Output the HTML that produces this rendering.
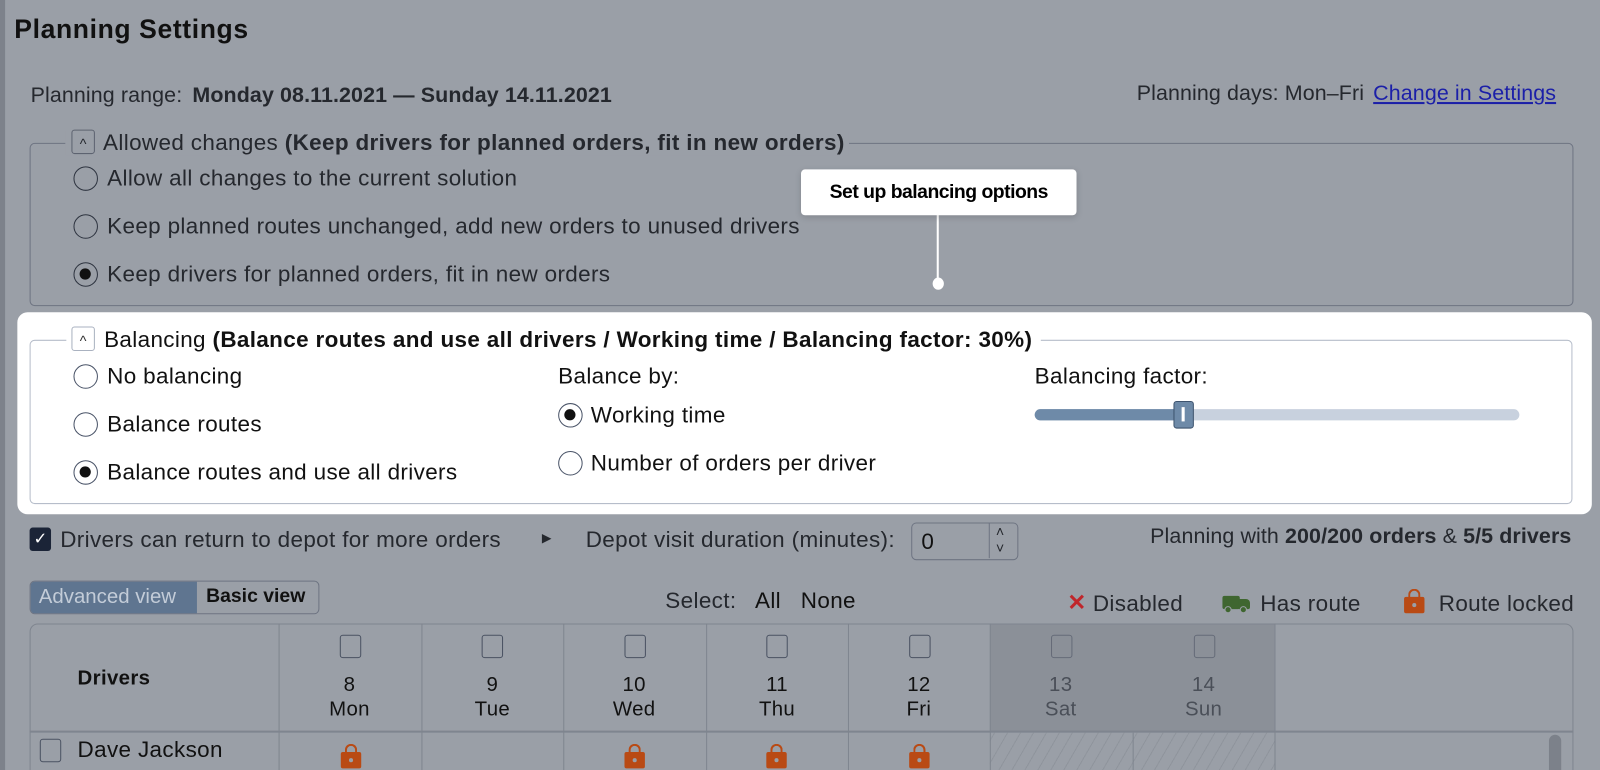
<!DOCTYPE html>
<html style="width:1600px;height:770px;overflow:hidden"><head><meta charset="utf-8"><style>
*{box-sizing:border-box;margin:0;padding:0}
body{width:1600px;height:770px;overflow:hidden;background:#9a9fa7;font-family:"Liberation Sans",Arial,sans-serif;color:#25282e;position:relative;font-size:22px;letter-spacing:0.35px}
#w{position:absolute;left:0;top:0;width:1568px;height:755px;transform:scale(1.0204);transform-origin:0 0;overflow:hidden}
.a{position:absolute;white-space:nowrap}
.l{line-height:24px}
.r{position:absolute;width:24px;height:24px;border-radius:50%;border:1.5px solid #2e3440}
.r.on::after{content:"";position:absolute;left:5px;top:5px;width:11px;height:11px;border-radius:50%;background:#111}
.wb .r{border-color:#4a5468}
.chev{position:absolute;width:23px;height:24px;border:1px solid #5d6370;border-radius:3px;font-size:14px;text-align:center;line-height:26px;letter-spacing:0}
.cb{position:absolute;width:21px;height:23px;border:1.5px solid #4a5262;border-radius:3px}
.col{position:absolute;top:611px;height:159px;border-left:1px solid #7f858f}
.hd{position:absolute;text-align:center;width:139px;line-height:24px;font-size:20px;letter-spacing:0.3px}
.lock{position:absolute;width:20px;height:16px;background:#b94a14;border-radius:2px}
.lock::before{content:"";position:absolute;left:4px;top:-8px;width:8px;height:9px;border:2px solid #b94a14;border-bottom:none;border-radius:6px 6px 0 0}
.lock::after{content:"";position:absolute;left:8px;top:6px;width:4px;height:4px;border-radius:50%;background:#9a9fa7}
</style></head><body><div id="w">
<div class="a" style="left:0;top:0;width:5px;height:770px;background:#7d828b"></div>
<div class="a" style="left:14px;top:13px;font-size:26px;font-weight:bold;color:#111;letter-spacing:0.6px">Planning Settings</div>
<div class="a l" style="left:30px;top:82px;font-size:21px;letter-spacing:0.1px">Planning range: <b style="margin-left:4px">Monday 08.11.2021 — Sunday 14.11.2021</b></div>
<div class="a l" style="right:43px;top:80px;font-size:21px;letter-spacing:0.1px">Planning days: Mon–Fri <span style="color:#1b1fa8;text-decoration:underline;margin-left:3px">Change in Settings</span></div>

<div class="a" style="left:29px;top:140px;width:1513px;height:160px;border:1.5px solid #6e7482;border-radius:5px"></div>
<div class="a" style="left:64px;top:128px;width:768px;height:24px;background:#9a9fa7"></div>
<div class="chev" style="left:70px;top:127px">^</div>
<div class="a l" style="left:101px;top:128px">Allowed changes <b>(Keep drivers for planned orders, fit in new orders)</b></div>
<div class="r" style="left:72px;top:163px"></div><div class="a l" style="left:105px;top:163px">Allow all changes to the current solution</div>
<div class="r" style="left:72px;top:210px"></div><div class="a l" style="left:105px;top:210px">Keep planned routes unchanged, add new orders to unused drivers</div>
<div class="r on" style="left:72px;top:257px"></div><div class="a l" style="left:105px;top:257px">Keep drivers for planned orders, fit in new orders</div>

<div class="a" style="left:918px;top:208px;width:2px;height:70px;background:#fff"></div>
<div class="a" style="left:914px;top:272px;width:11px;height:12px;border-radius:50%;background:#fff"></div>
<div class="a" style="left:785px;top:166px;width:270px;height:45px;background:#fff;border-radius:4px;box-shadow:0 2px 6px rgba(0,0,0,.15);font-weight:bold;font-size:19px;letter-spacing:-0.5px;line-height:45px;text-align:center;color:#000">Set up balancing options</div>

<div class="a wb" style="left:17px;top:306px;width:1543px;height:198px;background:#fff;border-radius:10px">
 <div class="a" style="left:12px;top:27px;width:1512px;height:161px;border:1.5px solid #b6bdca;border-radius:5px"></div>
 <div class="a" style="left:48px;top:14px;width:955px;height:26px;background:#fff"></div>
 <div class="chev" style="left:53px;top:14px;border-color:#aab2c0;color:#333">^</div>
 <div class="a l" style="left:85px;top:15px;color:#111;letter-spacing:0.35px">Balancing <b>(Balance routes and use all drivers / Working time / Balancing factor: 30%)</b></div>
 <div class="r" style="left:55px;top:51px"></div><div class="a l" style="left:88px;top:51px;color:#111">No balancing</div>
 <div class="r" style="left:55px;top:98px"></div><div class="a l" style="left:88px;top:98px;color:#111">Balance routes</div>
 <div class="r on" style="left:55px;top:145px"></div><div class="a l" style="left:88px;top:145px;color:#111">Balance routes and use all drivers</div>
 <div class="a l" style="left:530px;top:51px;color:#111">Balance by:</div>
 <div class="r on" style="left:530px;top:89px"></div><div class="a l" style="left:562px;top:89px;color:#111">Working time</div>
 <div class="r" style="left:530px;top:136px"></div><div class="a l" style="left:562px;top:136px;color:#111">Number of orders per driver</div>
 <div class="a l" style="left:997px;top:51px;color:#111">Balancing factor:</div>
 <div class="a" style="left:997px;top:95px;width:475px;height:11px;border-radius:6px;background:#c8d1de"></div>
 <div class="a" style="left:997px;top:95px;width:145px;height:11px;border-radius:6px 0 0 6px;background:#6e8aa8"></div>
 <div class="a" style="left:1133px;top:87px;width:20px;height:27px;border-radius:3px;background:#6e8aa8;border:1.5px solid #3d536e"><div class="a" style="left:7px;top:5px;width:3px;height:14px;background:#fff"></div></div>
</div>

<div class="a" style="left:29px;top:517px;width:21px;height:23px;background:#1b2437;border-radius:3px;color:#fff;font-size:16px;text-align:center;line-height:23px;letter-spacing:0">✓</div>
<div class="a l" style="left:59px;top:517px">Drivers can return to depot for more orders</div>
<div class="a" style="left:531px;top:520px;font-size:12px">▶</div>
<div class="a l" style="left:574px;top:517px">Depot visit duration (minutes):</div>
<div class="a" style="left:893px;top:512px;width:105px;height:37px;border:1.5px solid #6e7482;border-radius:5px">
 <div class="a l" style="left:9px;top:6px;color:#111">0</div>
 <div class="a" style="left:75px;top:0;width:1px;height:34px;background:#6e7482"></div>
 <div class="a" style="left:82px;top:0;font-size:14px;line-height:16px">˄<br>˅</div>
</div>
<div class="a l" style="right:28px;top:514px;font-size:21px;letter-spacing:0.1px">Planning with <b>200/200 orders</b> &amp; <b>5/5 drivers</b></div>

<div class="a" style="left:29px;top:569px;width:284px;height:33px;border:1.5px solid #6e7482;border-radius:5px;overflow:hidden;letter-spacing:0">
 <div class="a" style="left:0;top:0;width:163px;height:33px;background:#5f7590"></div>
 <div class="a" style="left:8px;top:4px;color:#c3ccd8;font-size:20px">Advanced view</div>
 <div class="a" style="left:172px;top:4px;color:#111;font-weight:bold;font-size:19px">Basic view</div>
</div>
<div class="a l" style="left:652px;top:577px">Select:&nbsp;&nbsp; <span style="color:#111">All&nbsp;&nbsp; None</span></div>
<div class="a" style="left:1046px;top:578px;color:#c0262b;font-weight:bold;font-size:22px">✕</div>
<div class="a l" style="left:1071px;top:580px">Disabled</div>
<div class="a" style="left:1198px;top:584px;width:17px;height:13px;background:#3f6630;border-radius:2px"></div>
<div class="a" style="left:1214px;top:587px;width:11px;height:10px;background:#3f6630;border-radius:0 4px 2px 0"></div>
<div class="a" style="left:1200px;top:594px;width:7px;height:7px;border-radius:50%;background:#3f6630;border:1.5px solid #9a9fa7"></div>
<div class="a" style="left:1215px;top:594px;width:7px;height:7px;border-radius:50%;background:#3f6630;border:1.5px solid #9a9fa7"></div>
<div class="a l" style="left:1235px;top:580px">Has route</div>
<div class="lock" style="left:1376px;top:585px"></div>
<div class="a l" style="left:1410px;top:580px">Route locked</div>

<div class="a" style="left:29px;top:611px;width:1513px;height:170px;border:1.5px solid #7f858f;border-radius:8px"></div>
<div class="a" style="left:970px;top:612px;width:279px;height:105px;background:#8b9098"></div>
<div class="a" style="left:970px;top:718px;width:279px;height:52px;background:repeating-linear-gradient(-60deg,#9a9fa7 0 10px,#8f949c 10px 11px)"></div>
<div class="a" style="left:29px;top:716px;width:1513px;height:2px;background:#7f858f"></div>
<div class="col" style="left:273px"></div><div class="col" style="left:413px"></div><div class="col" style="left:552px"></div><div class="col" style="left:692px"></div><div class="col" style="left:831px"></div><div class="col" style="left:970px"></div><div class="col" style="left:1110px;top:718px;height:52px"></div><div class="col" style="left:1249px"></div>
<div class="a" style="left:76px;top:654px;font-weight:bold;font-size:20px;color:#111">Drivers</div>

<div class="cb" style="left:333px;top:622px"></div><div class="hd" style="left:273px;top:659px;color:#111">8<br>Mon</div>
<div class="cb" style="left:472px;top:622px"></div><div class="hd" style="left:413px;top:659px;color:#111">9<br>Tue</div>
<div class="cb" style="left:612px;top:622px"></div><div class="hd" style="left:552px;top:659px;color:#111">10<br>Wed</div>
<div class="cb" style="left:751px;top:622px"></div><div class="hd" style="left:692px;top:659px;color:#111">11<br>Thu</div>
<div class="cb" style="left:891px;top:622px"></div><div class="hd" style="left:831px;top:659px;color:#111">12<br>Fri</div>
<div class="cb" style="left:1030px;top:622px;border-color:#656b78"></div><div class="hd" style="left:970px;top:659px;color:#4a4f58">13<br>Sat</div>
<div class="cb" style="left:1170px;top:622px;border-color:#656b78"></div><div class="hd" style="left:1110px;top:659px;color:#4a4f58">14<br>Sun</div>

<div class="cb" style="left:39px;top:724px"></div>
<div class="a l" style="left:76px;top:723px;color:#111">Dave Jackson</div>
<div class="lock" style="left:334px;top:737px"></div>
<div class="lock" style="left:612px;top:737px"></div>
<div class="lock" style="left:751px;top:737px"></div>
<div class="lock" style="left:891px;top:737px"></div>
<div class="a" style="left:1518px;top:720px;width:12px;height:53px;border-radius:6px;background:#7c818a"></div>
</div></body></html>
